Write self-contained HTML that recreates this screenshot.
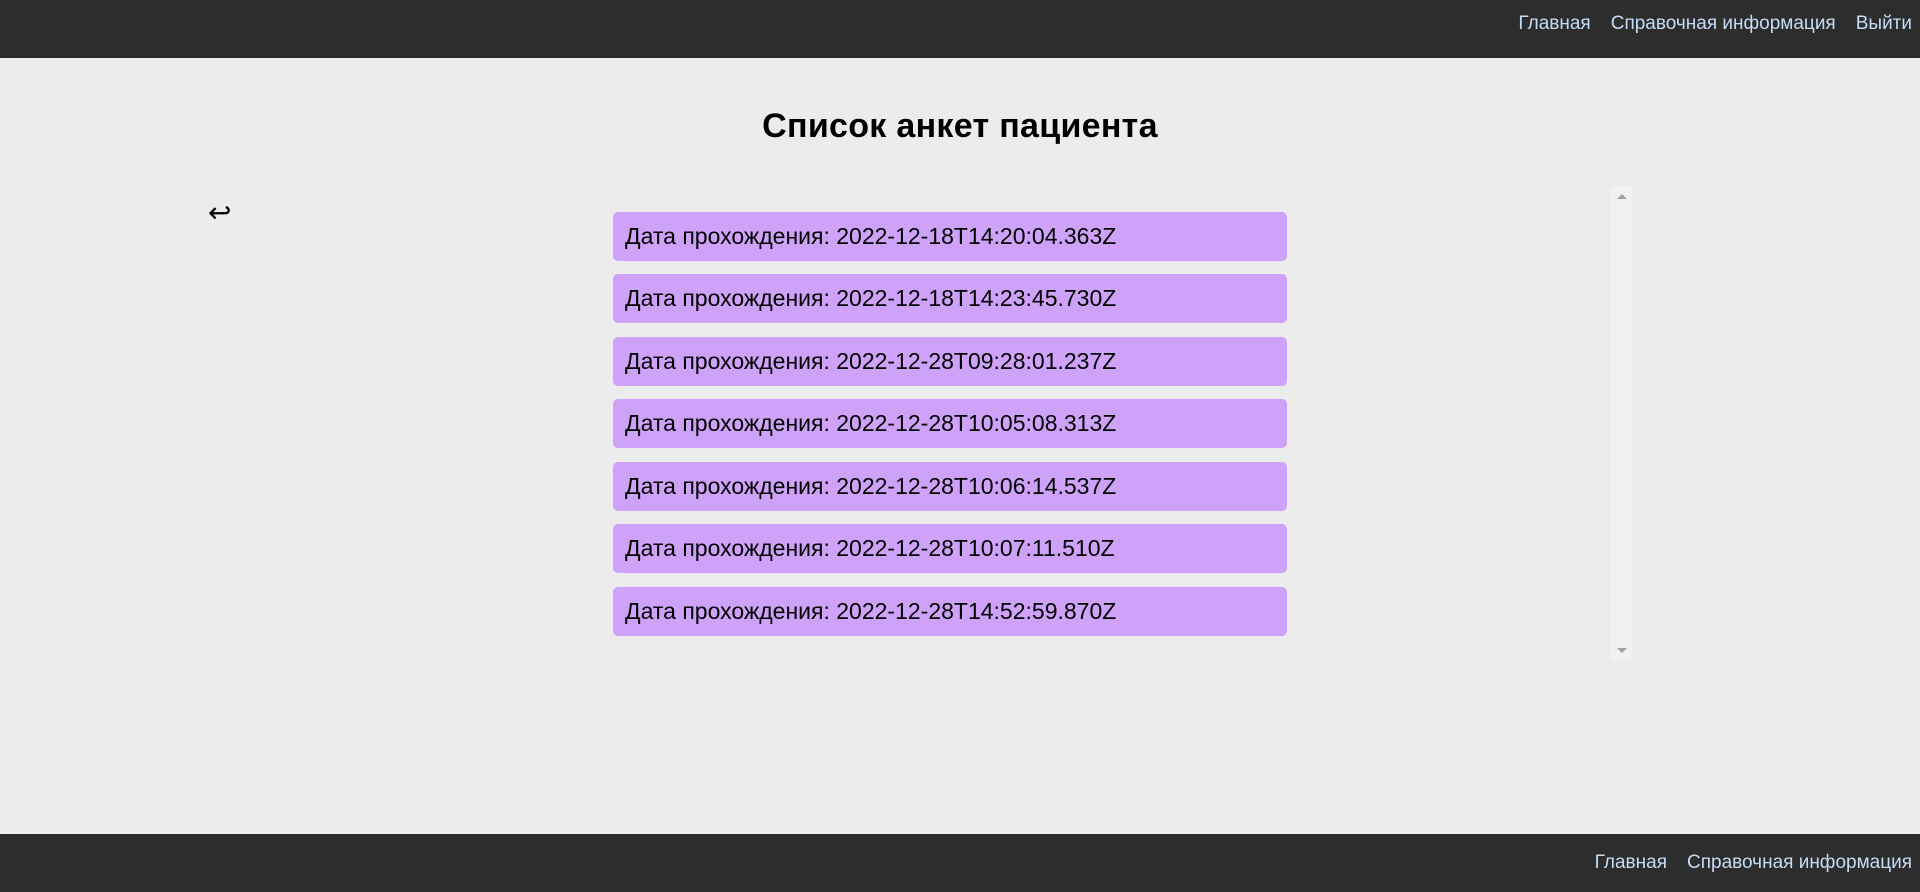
<!DOCTYPE html>
<html><head><meta charset="utf-8"><style>
html,body{margin:0;padding:0;width:1920px;height:892px;overflow:hidden;background:#ececec;font-family:"Liberation Sans",sans-serif;}
.hdr{position:absolute;left:0;top:0;width:1920px;height:58px;background:#2d2d2d;}
.ftr{position:absolute;left:0;top:834px;width:1920px;height:58px;background:#2d2d2d;}
.nav{position:absolute;right:8px;top:0;height:48px;line-height:48px;font-size:19px;color:#c5dcf5;}
.ftr .nav{line-height:58px;height:58px;top:0;}
.nav span{margin-left:20px;}
h1{position:absolute;left:0;width:1920px;top:107px;margin:0;text-align:center;font-size:34px;font-weight:bold;color:#000;letter-spacing:0.3px}
.back{position:absolute;left:208px;top:196px;font-size:28px;color:#000;}
.sb{position:absolute;left:1611px;top:186px;width:21px;height:475px;background:#f1f1f1;}
.sb .u{position:absolute;left:6px;top:8px;border-left:5px solid transparent;border-right:5px solid transparent;border-bottom:5px solid #a3a3a3;}
.sb .d{position:absolute;left:6px;bottom:8px;border-left:5px solid transparent;border-right:5px solid transparent;border-top:5px solid #a3a3a3;}
.it{position:absolute;left:613px;width:674px;height:49px;background:#cfa2f9;border-radius:5px;font-size:23px;line-height:49px;color:#000;box-sizing:border-box;padding-left:12px;}
</style></head><body>
<div class="hdr"><div class="nav"><span>Главная</span><span>Справочная информация</span><span>Выйти</span></div></div>
<h1>Список анкет пациента</h1>
<div class="back">↩</div>
<div class="it" style="top:212px">Дата прохождения: 2022-12-18T14:20:04.363Z</div>
<div class="it" style="top:274px">Дата прохождения: 2022-12-18T14:23:45.730Z</div>
<div class="it" style="top:337px">Дата прохождения: 2022-12-28T09:28:01.237Z</div>
<div class="it" style="top:399px">Дата прохождения: 2022-12-28T10:05:08.313Z</div>
<div class="it" style="top:462px">Дата прохождения: 2022-12-28T10:06:14.537Z</div>
<div class="it" style="top:524px">Дата прохождения: 2022-12-28T10:07:11.510Z</div>
<div class="it" style="top:587px">Дата прохождения: 2022-12-28T14:52:59.870Z</div>
<div class="sb"><div class="u"></div><div class="d"></div></div>
<div class="ftr"><div class="nav"><span>Главная</span><span>Справочная информация</span></div></div>
</body></html>
